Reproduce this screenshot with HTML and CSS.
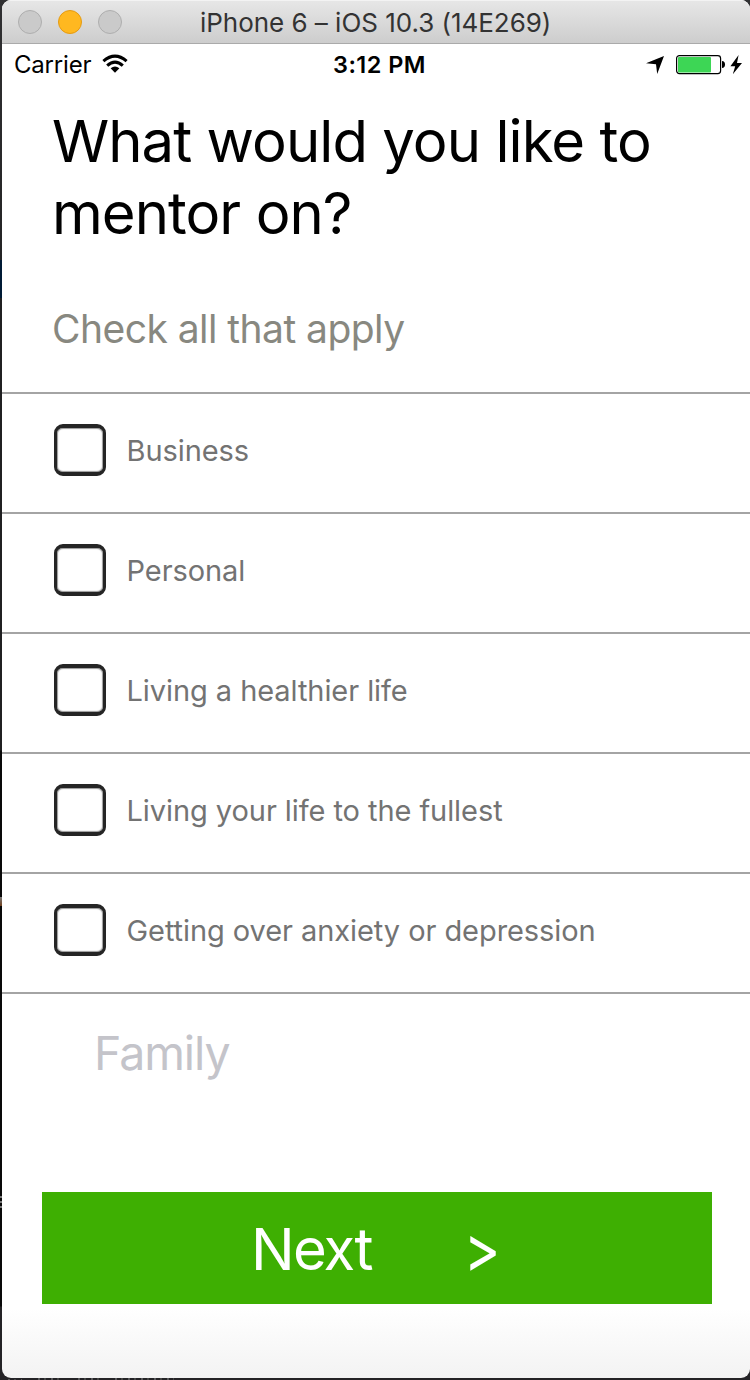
FILE: index.html
```html
<!DOCTYPE html>
<html lang="en">
<head>
<meta charset="utf-8">
<title>Mentor topics</title>
<link rel="stylesheet" href="styles.css">
</head>
<body>
<main class="window">
  <header class="titlebar">
    <div class="lights"><i class="light"></i><i class="light amber"></i><i class="light"></i></div>
    <span class="window-title">iPhone 6 – iOS 10.3 (14E269)</span>
  </header>
  <div class="status">
    <div class="network">
      <span class="carrier">Carrier</span>
      <svg class="wifi" width="26" height="20" viewBox="0 0 26 20"><g fill="none" stroke="#000" stroke-width="3.1"><path d="M1.4 7.1Q13-2.8 24.6 7.1"/><path d="M5.2 11.6Q13 4.6 20.8 11.6"/></g><path d="M8.6 14.3Q13 10.9 17.4 14.3L13 18.7Z"/></svg>
    </div>
    <span class="time">3:12 PM</span>
    <div class="power">
      <svg width="18" height="18" viewBox="0 0 18 18"><path d="M18 0L11.2 18L10 8.2L0 7.3Z"/></svg>
      <svg class="battery" width="50" height="20" viewBox="0 0 50 20"><rect x=".6" y=".6" width="44" height="18" rx="2.8" fill="#fff" stroke="#000" stroke-width="1.2"/><rect x="2" y="2" width="33" height="15.5" rx="1" fill="#3dd655"/><path d="M46 6Q49 6 49 9.6Q49 13 46 13Z"/></svg>
      <svg width="12" height="20" viewBox="0 0 12 20"><path d="M8.6 0L.4 11.3H5.2L2.8 19.3L12 8H7Z"/></svg>
    </div>
  </div>
  <h1 class="heading">What would you like to<br>mentor on?</h1>
  <p class="hint">Check all that apply</p>
  <ul class="topics">
    <li class="topic"><i class="box"></i><span>Business</span></li>
    <li class="topic"><i class="box"></i><span>Personal</span></li>
    <li class="topic"><i class="box"></i><span>Living a healthier life</span></li>
    <li class="topic"><i class="box"></i><span>Living your life to the fullest</span></li>
    <li class="topic"><i class="box"></i><span>Getting over anxiety or depression</span></li>
  </ul>
  <div class="entry">Family</div>
  <div class="next"><span class="next-label">Next</span><span class="chevron">&gt;</span></div>
</main>
</body>
</html>
```
FILE: styles.css
```css
* { box-sizing: border-box; }
body {
  margin: 0;
  height: 1380px;
  padding: 0 0 2px 2px;
  overflow: hidden;
  background:
    repeating-linear-gradient(90deg, #58585a 0 2px, transparent 2px 6px, #444 6px 8px, transparent 8px 13px) 8px 1379px / 14px 1px no-repeat,
    repeating-linear-gradient(90deg, #58585a 0 2px, transparent 2px 6px, #444 6px 8px, transparent 8px 13px) 38px 1378px / 26px 2px no-repeat,
    repeating-linear-gradient(90deg, #58585a 0 2px, transparent 2px 6px, #444 6px 8px, transparent 8px 13px) 78px 1378px / 26px 2px no-repeat,
    repeating-linear-gradient(90deg, #58585a 0 2px, transparent 2px 6px, #444 6px 8px, transparent 8px 13px) 115px 1378px / 59px 2px no-repeat,
    linear-gradient(#777, #70401d) 0 897px / 2px 9px no-repeat,
    repeating-linear-gradient(#777 0 2px, transparent 2px 5px) 0 1196px / 2px 15px no-repeat,
    linear-gradient(#303032 0, #242425 260px, #001a35 260px, #001a35 298px, #202021 298px, #202021 750px, #090909 751px, #090909 1306px, #242326 1307px);
  font-family: Inter, "Liberation Sans", sans-serif;
  color: #000;
  white-space: nowrap;
}
.window {
  height: 1378px;
  border-radius: 9px;
  overflow: hidden;
  background: linear-gradient(#fff 1308px, #f3f3f3 1378px);
}
.titlebar {
  display: grid;
  grid-template-columns: 198px 1fr;
  height: 44px;
  align-items: center;
  background: linear-gradient(#e7e7e7, #cdcdcd);
  border-bottom: 1px solid #aaa;
  box-shadow: inset 0 1px #f3f3f3;
}
.lights { display: flex; gap: 16px; padding-left: 16px; }
.light { width: 24px; height: 24px; border-radius: 50%; border: 1px solid #aeaeae; background: #cacaca; }
.amber { background: #ffb820; border-color: #e59b12; }
.window-title { padding-top: 2px; color: #333; font-size: 26px; line-height: 30px; letter-spacing: -.03px; }
.status {
  display: grid;
  grid-template-columns: 331px 1fr auto;
  height: 40px;
  font-size: 24px;
  line-height: 42px;
}
.network { display: flex; padding-left: 12px; }
.carrier { width: 88px; letter-spacing: -.2px; }
.wifi { margin-top: 10px; }
.time { font-weight: 600; font-size: 23.5px; letter-spacing: .45px; }
.power { display: flex; padding: 11px 8px 0 0; gap: 4px; }
.power svg:first-child { margin: 1px 8px 0 0; }
.heading {
  margin: 0;
  padding: 21px 0 0 50px;
  height: 188px;
  font-size: 58px;
  line-height: 72px;
  font-weight: 400;
  letter-spacing: -.94px;
}
.hint { margin: 0; padding: 33px 0 0 50px; height: 120px; color: #888880; font-size: 39px; line-height: 48px; letter-spacing: -.54px; }
.topics { list-style: none; margin: 0; padding: 0; border-top: 2px solid #a4a4a4; }
.topic {
  display: flex;
  height: 120px;
  padding: 30px 0 0 52px;
  gap: 20.5px;
  border-bottom: 2px solid #a4a4a4;
  color: #737373;
  font-size: 29px;
  line-height: 54px;
  letter-spacing: -.07px;
}
.box { width: 52px; height: 52px; border: 3.5px solid #252525; border-width: 4px 3px; border-radius: 9px; box-shadow: inset 0 0 1px 1px #999; }
.entry { height: 198px; padding: 29px 0 0 92px; color: #c4c4ca; font-size: 46.5px; line-height: 60px; letter-spacing: -1.1px; }
.next {
  display: flex;
  width: 670px;
  height: 112px;
  margin-left: 40px;
  padding-left: 209px;
  background: #3eaf02;
  color: #fff;
  font-size: 58px;
  line-height: 115px;
  letter-spacing: -1.8px;
}
.next-label { width: 213px; }
.chevron { font-size: 55px; line-height: 112px; transform: scaleY(1.2); }
```
